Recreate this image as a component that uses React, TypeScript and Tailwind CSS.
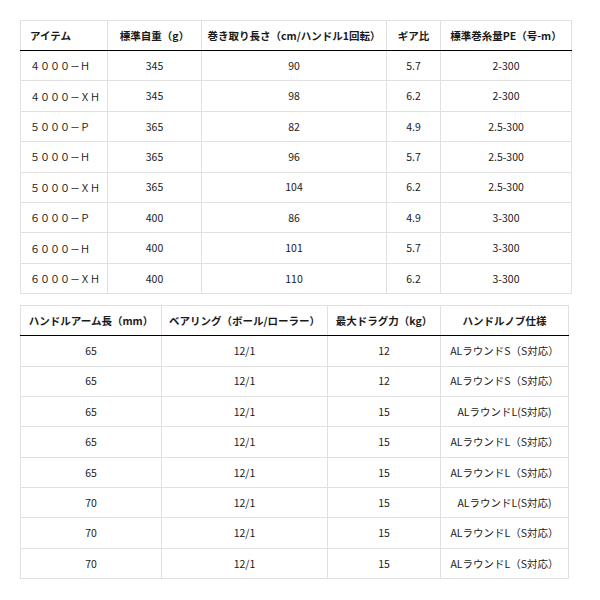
import React from "react";

const font = { fontFamily: '"Noto Sans CJK JP", "Noto Sans", sans-serif' };

const specRows = [
  ["４０００－Ｈ", "345", "90", "5.7", "2-300"],
  ["４０００－ＸＨ", "345", "98", "6.2", "2-300"],
  ["５０００－Ｐ", "365", "82", "4.9", "2.5-300"],
  ["５０００－Ｈ", "365", "96", "5.7", "2.5-300"],
  ["５０００－ＸＨ", "365", "104", "6.2", "2.5-300"],
  ["６０００－Ｐ", "400", "86", "4.9", "3-300"],
  ["６０００－Ｈ", "400", "101", "5.7", "3-300"],
  ["６０００－ＸＨ", "400", "110", "6.2", "3-300"],
];

const handleRows = [
  ["65", "12/1", "12", "ALラウンドS（S対応）"],
  ["65", "12/1", "12", "ALラウンドS（S対応）"],
  ["65", "12/1", "15", "ALラウンドL(S対応)"],
  ["65", "12/1", "15", "ALラウンドL（S対応）"],
  ["65", "12/1", "15", "ALラウンドL（S対応）"],
  ["70", "12/1", "15", "ALラウンドL(S対応)"],
  ["70", "12/1", "15", "ALラウンドL（S対応）"],
  ["70", "12/1", "15", "ALラウンドL（S対応）"],
];

export default function App() {
  return (
    <div className="w-[600px] h-[600px] bg-white pt-[20px] pl-[20px] text-[#1a1a1a]" style={font}>
      {/* spec table */}
      <table className="w-[551px] border-collapse table-fixed text-[10.5px]">
        <colgroup>
          <col className="w-[87px]" />
          <col className="w-[94px]" />
          <col className="w-[185px]" />
          <col className="w-[54px]" />
          <col className="w-[131px]" />
        </colgroup>
        <thead>
          <tr className="h-[30px] border-b-[1.5px] border-b-black">
            <th className="border border-[#e0e0e0] border-b-black text-left pl-[9px] font-bold">アイテム</th>
            <th className="border border-[#e0e0e0] border-b-black font-bold">標準自重（g）</th>
            <th className="border border-[#e0e0e0] border-b-black font-bold">巻き取り長さ（cm/ハンドル1回転）</th>
            <th className="border border-[#e0e0e0] border-b-black font-bold">ギア比</th>
            <th className="border border-[#e0e0e0] border-b-black font-bold">標準巻糸量PE（号-m）</th>
          </tr>
        </thead>
        <tbody>
          {specRows.map((r, i) => (
            <tr key={i} className="h-[30.4px]">
              <td className="border border-[#e0e0e0] text-left pl-[9px] text-[10px]">{r[0]}</td>
              <td className="border border-[#e0e0e0] text-center">{r[1]}</td>
              <td className="border border-[#e0e0e0] text-center">{r[2]}</td>
              <td className="border border-[#e0e0e0] text-center">{r[3]}</td>
              <td className="border border-[#e0e0e0] text-center">{r[4]}</td>
            </tr>
          ))}
        </tbody>
      </table>

      {/* handle table */}
      <table className="mt-[11px] w-[548px] border-collapse table-fixed text-[10.5px]">
        <colgroup>
          <col className="w-[141px]" />
          <col className="w-[166px]" />
          <col className="w-[113px]" />
          <col className="w-[128px]" />
        </colgroup>
        <thead>
          <tr className="h-[30px] border-b-[1.5px] border-b-black">
            <th className="border border-[#e0e0e0] border-b-black font-bold">ハンドルアーム長（mm）</th>
            <th className="border border-[#e0e0e0] border-b-black font-bold">ベアリング（ボール/ローラー）</th>
            <th className="border border-[#e0e0e0] border-b-black font-bold">最大ドラグ力（kg）</th>
            <th className="border border-[#e0e0e0] border-b-black font-bold">ハンドルノブ仕様</th>
          </tr>
        </thead>
        <tbody>
          {handleRows.map((r, i) => (
            <tr key={i} className="h-[30.4px]">
              <td className="border border-[#e0e0e0] text-center">{r[0]}</td>
              <td className="border border-[#e0e0e0] text-center">{r[1]}</td>
              <td className="border border-[#e0e0e0] text-center">{r[2]}</td>
              <td className="border border-[#e0e0e0] text-center">{r[3]}</td>
            </tr>
          ))}
        </tbody>
      </table>
    </div>
  );
}
